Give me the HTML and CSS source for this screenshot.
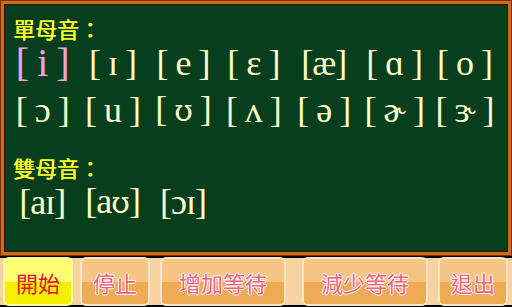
FILE: index.html
```html
<!DOCTYPE html>
<html lang="zh-Hant">
<head>
<meta charset="utf-8">
<title>母音</title>
<link rel="stylesheet" href="styles.css">
</head>
<body>
<div class="app">
  <div class="frame">
    <div class="board">
      <div class="heading">單母音：</div>
      <div class="row">
        <span class="ipa ipa-active">[ i ]</span>
        <span class="ipa">[ ɪ ]</span>
        <span class="ipa">[ e ]</span>
        <span class="ipa">[ ɛ ]</span>
        <span class="ipa">[æ]</span>
        <span class="ipa">[ ɑ ]</span>
        <span class="ipa">[ o ]</span>
      </div>
      <div class="row">
        <span class="ipa">[ ɔ ]</span>
        <span class="ipa">[ u ]</span>
        <span class="ipa">[ <span class="alt">ʊ</span> ]</span>
        <span class="ipa">[ ʌ ]</span>
        <span class="ipa">[ ə ]</span>
        <span class="ipa">[ ɚ ]</span>
        <span class="ipa">[ ɝ ]</span>
      </div>
      <div class="heading heading-second">雙母音：</div>
      <div class="row">
        <span class="ipa">[aɪ]</span>
        <span class="ipa">[a<span class="alt">ʊ</span>]</span>
        <span class="ipa">[ɔɪ]</span>
      </div>
    </div>
  </div>
  <div class="bar">
    <div class="btn btn-start">開始</div>
    <div class="btn btn-stop">停止</div>
    <div class="btn btn-wide btn-more">增加等待</div>
    <div class="btn btn-wide btn-less">減少等待</div>
    <div class="btn btn-exit">退出</div>
  </div>
</div>
</body>
</html>
```

FILE: styles.css
```css
html, body {
  margin: 0;
  padding: 0;
  background: #000;
}

.app {
  width: 512px;
  height: 307px;
  display: flex;
  flex-direction: column;
  overflow: hidden;
}

.frame {
  height: 256px;
  box-sizing: border-box;
  border: 1px solid #7c2e04;
  background: #d26c14;
  padding: 3px;
}

.board {
  height: 100%;
  box-sizing: border-box;
  background: #073f1e;
  border: 1px solid #2c1404;
  padding: 12px 0 0 2px;
}

.heading {
  font-family: "Noto Sans CJK TC", "Noto Sans CJK SC", sans-serif;
  font-size: 22px;
  line-height: 22px;
  color: #ffff2a;
  padding-left: 6px;
  text-shadow: 0.4px 0 #ffff2a;
}

.heading-second {
  margin-top: 23px;
}

.row {
  display: grid;
  grid-template-columns: repeat(7, 70.4px);
  height: 47px;
  align-items: center;
}

.ipa {
  font-family: "Liberation Serif", "DejaVu Serif", serif;
  font-size: 36px;
  line-height: 40px;
  color: #ffffc4;
  text-align: center;
  white-space: pre;
  letter-spacing: -1px;
}

.alt {
  font-family: "DejaVu Serif", serif;
  font-size: 30px;
}

.ipa-active {
  color: #f2a2e4;
  font-size: 40px;
}

.bar {
  flex: 1;
  display: flex;
  align-items: stretch;
  padding: 1px 0 1px 3px;
  background: linear-gradient(#000 0 2px, #f7d3a2 2px calc(100% - 2px), #000 calc(100% - 2px));
}

.btn {
  width: 70px;
  box-sizing: border-box;
  border: 2px solid #fde6c6;
  border-radius: 6px;
  background: linear-gradient(#f7c686 0 52%, #efaa56 52% 100%);
  display: flex;
  align-items: center;
  justify-content: center;
  font-family: "Noto Sans CJK TC", "Noto Sans CJK SC", sans-serif;
  font-size: 22px;
  color: #f0607a;
  text-shadow: 1px 0 #fff, -1px 0 #fff, 0 1px #fff, 0 -1px #fff;
}

.btn-wide {
  width: 126px;
}

.btn-start {
  border-color: #fcff9a;
  background: linear-gradient(#ffff74 0 52%, #f4f000 52% 100%);
  color: #e4102c;
  text-shadow: none;
}

.btn-stop { margin-left: 7px; }
.btn-more { margin-left: 10px; }
.btn-less { margin-left: 16px; }
.btn-exit { margin-left: 10px; }
```
